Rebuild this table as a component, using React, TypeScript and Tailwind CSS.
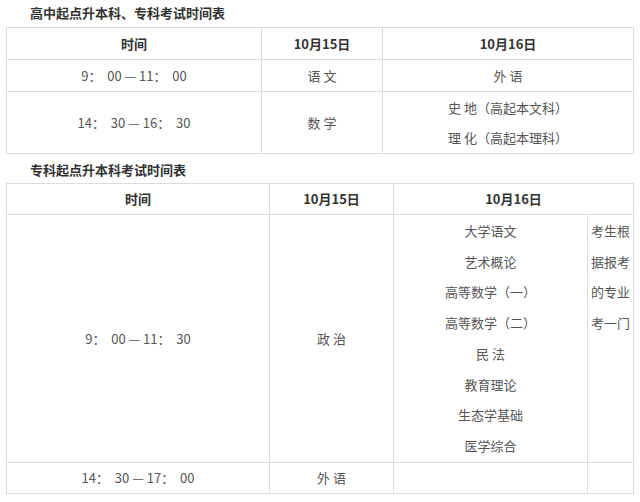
const font = { fontFamily: '"Microsoft YaHei", "Noto Sans CJK SC", "Noto Sans", sans-serif' };

const cell = "border border-[#dcdcdc] text-center align-middle p-0";
const head = cell + " font-bold text-[#333333]";

const subjects = ["大学语文", "艺术概论", "高等数学（一）", "高等数学（二）", "民 法", "教育理论", "生态学基础", "医学综合"];

export default function App() {
  return (
    <div className="w-[640px] h-[502px] bg-white text-[13px] text-[#555555]" style={font}>
      <div className="pt-[4px] pl-[30px] h-[27px] leading-[18px] font-bold text-[#333333]">
        高中起点升本科、专科考试时间表
      </div>
      <table className="ml-[6px] w-[627px] table-fixed border-collapse">
        <colgroup>
          <col className="w-[255px]" />
          <col className="w-[121px]" />
          <col className="w-[251px]" />
        </colgroup>
        <tbody>
          <tr className="h-[32px]">
            <td className={head}>时间</td>
            <td className={head}>10月15日</td>
            <td className={head}>10月16日</td>
          </tr>
          <tr className="h-[32px]">
            <td className={cell}>9：&nbsp; 00 — 11：&nbsp; 00</td>
            <td className={cell}>语 文</td>
            <td className={cell}>外 语</td>
          </tr>
          <tr className="h-[62px]">
            <td className={cell}>14：&nbsp; 30 — 16：&nbsp; 30</td>
            <td className={cell}>数 学</td>
            <td className={cell + " leading-[30px]"}>
              <p>史 地（高起本文科）</p>
              <p>理 化（高起本理科）</p>
            </td>
          </tr>
        </tbody>
      </table>
      <div className="pt-[7px] pl-[30px] h-[29px] leading-[18px] font-bold text-[#333333]">
        专科起点升本科考试时间表
      </div>
      <table className="ml-[6px] w-[627px] table-fixed border-collapse">
        <colgroup>
          <col className="w-[263px]" />
          <col className="w-[124px]" />
          <col className="w-[194px]" />
          <col className="w-[46px]" />
        </colgroup>
        <tbody>
          <tr className="h-[31px]">
            <td className={head}>时间</td>
            <td className={head}>10月15日</td>
            <td className={head} colSpan={2}>10月16日</td>
          </tr>
          <tr className="h-[247px]">
            <td className={cell}>9：&nbsp; 00 — 11：&nbsp; 30</td>
            <td className={cell}>政 治</td>
            <td className={cell + " leading-[30.7px] pt-[1px]"}>
              {subjects.map((s) => (
                <p key={s}>{s}</p>
              ))}
            </td>
            <td className={cell + " align-top leading-[30.7px] pt-[1px]"}>
              <p className="break-all">考生根据报考的专业考一门</p>
            </td>
          </tr>
          <tr className="h-[31px]">
            <td className={cell}>14：&nbsp; 30 — 17：&nbsp; 00</td>
            <td className={cell}>外 语</td>
            <td className={cell}></td>
            <td className={cell}></td>
          </tr>
        </tbody>
      </table>
    </div>
  );
}
